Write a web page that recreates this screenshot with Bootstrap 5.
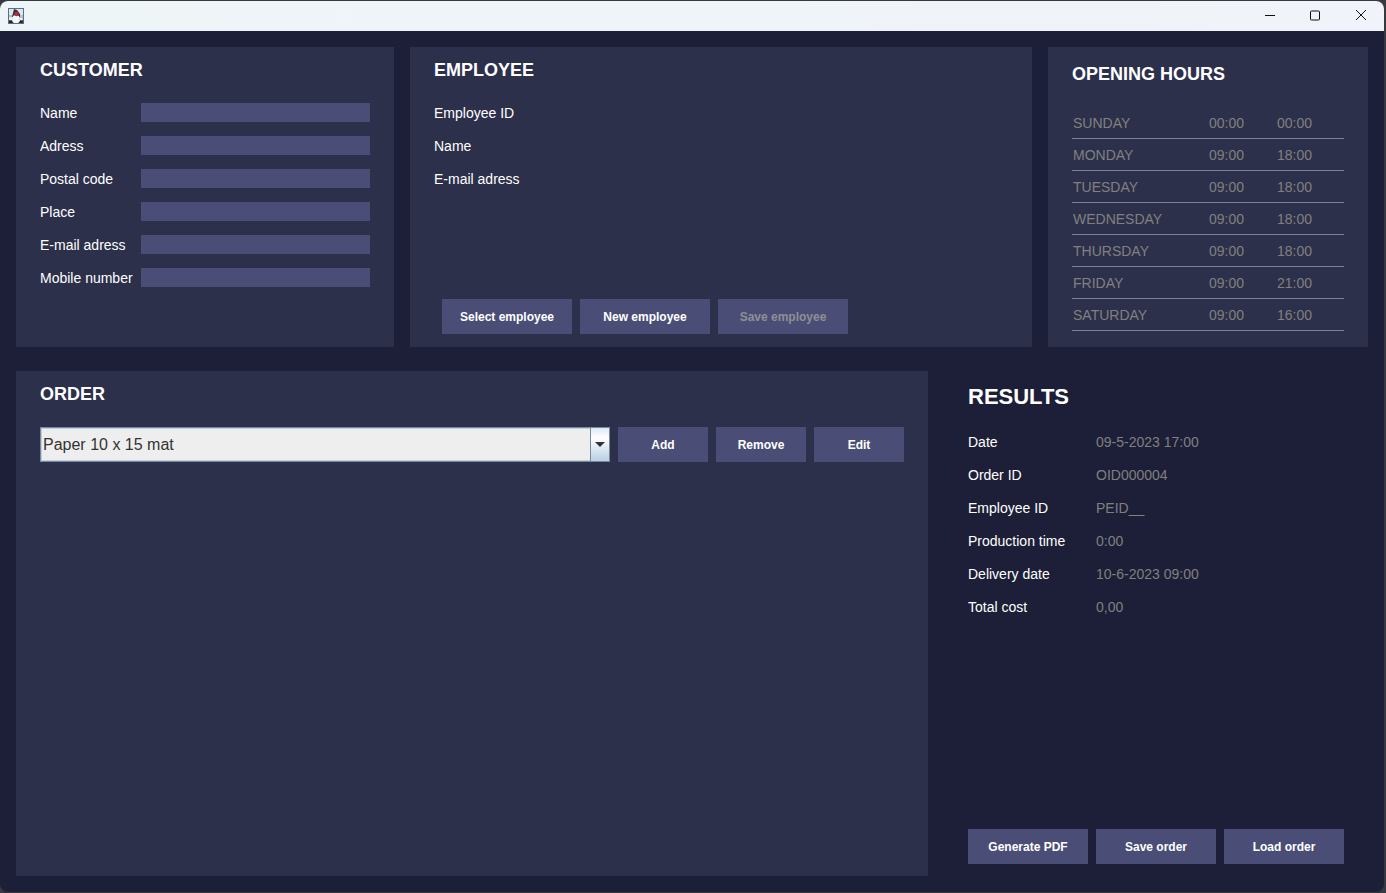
<!DOCTYPE html>
<html lang="en">
<head>
<meta charset="utf-8">
<meta name="viewport" content="width=device-width, initial-scale=1">
<title>Order</title>
<link href="https://cdn.jsdelivr.net/npm/bootstrap@5.3.0/dist/css/bootstrap.min.css" rel="stylesheet">
<style>
  body { background: #38393c; color: #fff; font: 14px/20px "Liberation Sans", Arial, sans-serif; }
  .app-window { min-height: 100vh; padding: 1px 2px 1px 0; }
  .app-frame { background: #1c1f37; border-radius: 8px; overflow: hidden; }
  .title-bar { height: 30px; background: linear-gradient(90deg, #eef5f7, #f0f3f9); }
  .window-button { width: 46px; height: 30px; padding: 0; border: 0; background: transparent; color: #111; display: flex; align-items: center; justify-content: center; }
  .top-row { display: grid; grid-template-columns: 378px minmax(0, 1fr) 320px; gap: 16px; min-height: 300px; }
  .bottom-row { display: grid; grid-template-columns: minmax(0, 1fr) 440px; }
  .panel { background: #2d304b; padding: 12px 24px 13px; }
  .panel-title { font-size: 18px; line-height: 22px; font-weight: 700; margin: 0; }
  .results-title { font-size: 22px; line-height: 27px; font-weight: 700; margin: 0; }
  .line-list { display: grid; row-gap: 13px; margin: 22px 0 0; }
  .line-list dt { font-weight: 400; }
  .line-list dd, .hours { color: #808080; margin: 0; }
  .customer-lines { grid-template-columns: 101px minmax(0, 1fr); align-items: start; }
  .customer-lines label { white-space: nowrap; }
  .field { width: 100%; height: 19px; padding: 0 2px; border: 0; background: #4a4e76; color: #fff; }
  .result-lines { grid-template-columns: 128px minmax(0, 1fr); }
  .action { height: 35px; padding: 0; border: 0; border-radius: 0; background: #4a4e76; color: #fff; font-size: 12px; line-height: 20px; font-weight: 700; }
  .action:hover { background: #565b88; color: #fff; }
  .action:disabled { background: #4a4e76; color: #8f8f94; opacity: 1; }
  .w-wide { width: 130px; }
  .w-mid { width: 120px; }
  .w-short { width: 90px; }
  .order-bar { margin-top: 22px; }
  .results { padding: 12px 24px 12px 40px; }
  .hours-panel { padding-top: 16px; }
  .hours { width: 100%; table-layout: fixed; border-collapse: separate; border-spacing: 0; margin-top: 22px; }
  .hours th, .hours td { height: 32px; padding: 0 1px; border-bottom: 1px solid #7b7f9b; font-weight: 400; }
  .hours .day { width: 136px; }
  .hours .opens { width: 68px; }
  .product-select { width: 100%; height: 35px; padding: 0 24px 0 2px; border: 1px solid #7a8a99; border-radius: 0; background: #eee; color: #333; font-size: 16px; appearance: none; box-shadow: inset 0 0 0 1px #b8cfe5; }
  .product-arrow { top: 0; right: 0; bottom: 0; width: 20px; border: 1px solid #7a8a99; background: linear-gradient(#dde8f3, #fff 30%, #e4edf6 55%, #b8cfe5); pointer-events: none; }
</style>
</head>
<body>
<div class="app-window d-flex min-vh-100">
  <div class="app-frame d-flex flex-column flex-grow-1">
    <header class="title-bar d-flex align-items-center justify-content-between">
      <svg class="ms-2" width="16" height="16" viewBox="0 0 16 16" aria-hidden="true">
        <rect x=".5" y=".5" width="15" height="15" fill="#dce8ef" stroke="#5c6f86"/>
        <path d="M1 7H5V11H1ZM11 7H15V11H11Z" fill="#b4c2cc"/>
        <path d="M1 11H15V15H1Z" fill="#59636d"/>
        <path d="M6 1L9 2 12 6 12 9 4 9 5 5Z" fill="#30343c"/>
        <path d="M5 8Q8 6 11 8L12 13 10 15H6L4 13Z" fill="#f7f8f9"/>
        <path d="M1 10L3 9 5 10 4 12H1ZM12 10L14 10 15 12H12Z" fill="#f1f4f6"/>
        <path d="M1 13H4L5 15H1ZM12 13H15V15H11Z" fill="#25292f"/>
        <circle cx="8.500" cy="6" r="2.200" fill="#bd2938"/>
      </svg>
      <div class="d-flex">
        <button class="window-button" type="button" aria-label="Minimize"><svg width="12" height="12" viewBox="0 0 12 12"><path d="M2 5.500H12" stroke="currentColor"/></svg></button>
        <button class="window-button" type="button" aria-label="Maximize"><svg width="12" height="12" viewBox="0 0 12 12" fill="none"><rect x="1.500" y="1" width="9" height="9" rx="1" stroke="currentColor"/></svg></button>
        <button class="window-button" type="button" aria-label="Close"><svg width="12" height="12" viewBox="0 0 12 12"><path d="M1 0L11 10M11 0L1 10" stroke="currentColor"/></svg></button>
      </div>
    </header>

    <main class="d-flex flex-column flex-grow-1 gap-4 p-3">
      <div class="top-row">
        <section class="panel">
          <h2 class="panel-title">CUSTOMER</h2>
          <form class="line-list customer-lines">
            <label for="name">Name</label><input class="field" id="name" type="text">
            <label for="address">Adress</label><input class="field" id="address" type="text">
            <label for="postal">Postal code</label><input class="field" id="postal" type="text">
            <label for="place">Place</label><input class="field" id="place" type="text">
            <label for="email">E-mail adress</label><input class="field" id="email" type="email">
            <label for="mobile">Mobile number</label><input class="field" id="mobile" type="tel">
          </form>
        </section>

        <section class="panel d-flex flex-column">
          <h2 class="panel-title">EMPLOYEE</h2>
          <div class="line-list">
            <div>Employee ID</div>
            <div>Name</div>
            <div>E-mail adress</div>
          </div>
          <div class="d-flex gap-2 mt-auto ms-2">
            <button class="btn action w-wide" type="button">Select employee</button>
            <button class="btn action w-wide" type="button">New employee</button>
            <button class="btn action w-wide" type="button" disabled>Save employee</button>
          </div>
        </section>

        <section class="panel hours-panel">
          <h2 class="panel-title">OPENING HOURS</h2>
          <table class="hours">
            <colgroup><col class="day"><col class="opens"><col></colgroup>
            <tbody>
              <tr><th scope="row">SUNDAY</th><td>00:00</td><td>00:00</td></tr>
              <tr><th scope="row">MONDAY</th><td>09:00</td><td>18:00</td></tr>
              <tr><th scope="row">TUESDAY</th><td>09:00</td><td>18:00</td></tr>
              <tr><th scope="row">WEDNESDAY</th><td>09:00</td><td>18:00</td></tr>
              <tr><th scope="row">THURSDAY</th><td>09:00</td><td>18:00</td></tr>
              <tr><th scope="row">FRIDAY</th><td>09:00</td><td>21:00</td></tr>
              <tr><th scope="row">SATURDAY</th><td>09:00</td><td>16:00</td></tr>
            </tbody>
          </table>
        </section>
      </div>

      <div class="bottom-row flex-grow-1">
        <section class="panel">
          <h2 class="panel-title"><label class="d-block" for="product">ORDER</label></h2>
          <div class="order-bar d-flex gap-2">
            <div class="position-relative flex-grow-1">
              <select class="product-select d-block" id="product"><option>Paper 10 x 15 mat</option></select>
              <span class="product-arrow position-absolute d-flex align-items-center justify-content-center"><svg width="10" height="5" viewBox="0 0 10 5"><path d="M0 0H10L5 5Z" fill="#333"/></svg></span>
            </div>
            <button class="btn action w-short" type="button">Add</button>
            <button class="btn action w-short" type="button">Remove</button>
            <button class="btn action w-short" type="button">Edit</button>
          </div>
        </section>

        <section class="results d-flex flex-column">
          <h2 class="results-title">RESULTS</h2>
          <dl class="line-list result-lines">
            <dt>Date</dt><dd>09-5-2023 17:00</dd>
            <dt>Order ID</dt><dd>OID000004</dd>
            <dt>Employee ID</dt><dd>PEID__</dd>
            <dt>Production time</dt><dd>0:00</dd>
            <dt>Delivery date</dt><dd>10-6-2023 09:00</dd>
            <dt>Total cost</dt><dd>0,00</dd>
          </dl>
          <div class="d-flex gap-2 mt-auto">
            <button class="btn action w-mid" type="button">Generate PDF</button>
            <button class="btn action w-mid" type="button">Save order</button>
            <button class="btn action w-mid" type="button">Load order</button>
          </div>
        </section>
      </div>
    </main>
  </div>
</div>
<script src="https://cdn.jsdelivr.net/npm/bootstrap@5.3.0/dist/js/bootstrap.bundle.min.js"></script>
</body>
</html>
